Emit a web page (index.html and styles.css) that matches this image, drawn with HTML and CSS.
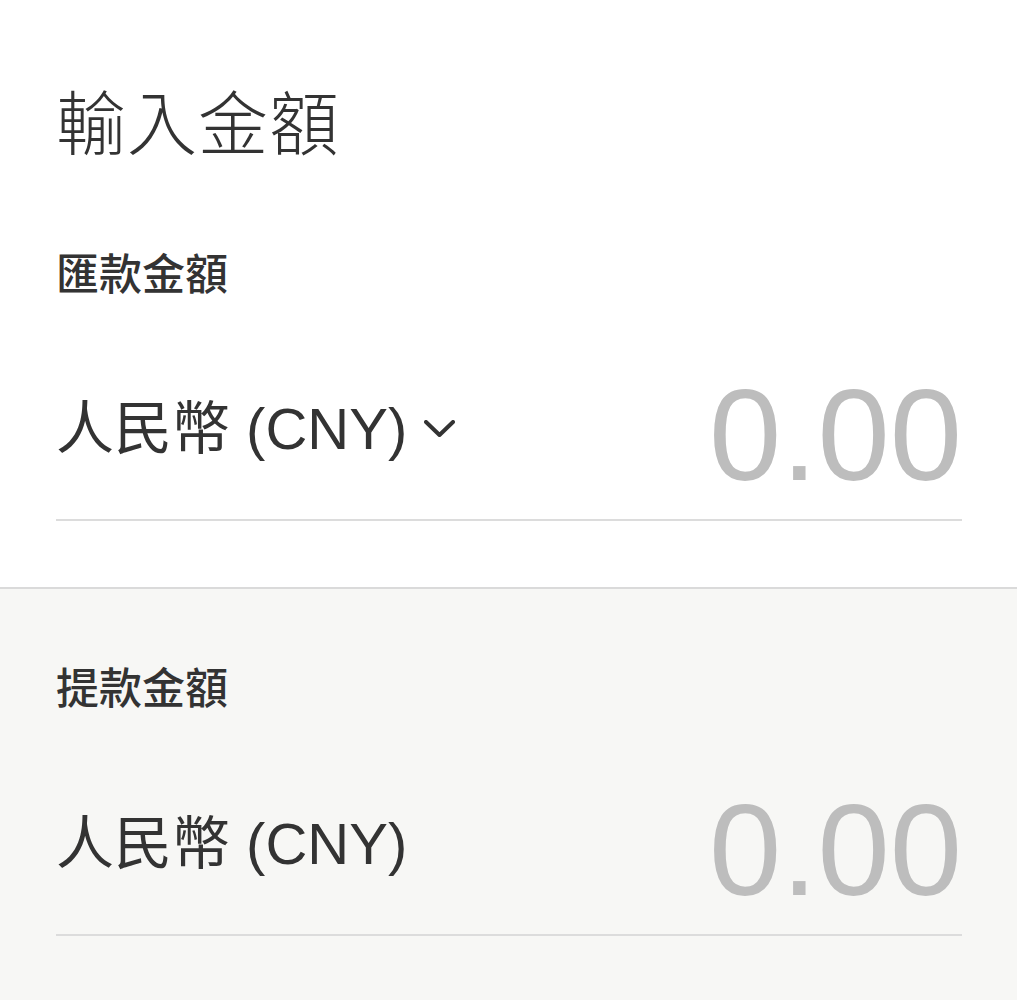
FILE: index.html
```html
<!DOCTYPE html>
<html lang="zh-Hant">
<head>
    <meta charset="UTF-8">
    <meta name="viewport" content="width=device-width, initial-scale=1.0">
    <title>輸入金額</title>
    <link rel="stylesheet" href="styles.css">
</head>
<body>
    <div id="container">
        <div class="panel panel-top">
            <h1 class="title">輸入金額</h1>
            <div class="field">
                <div class="field-label">匯款金額</div>
                <div class="amount-row">
                    <button class="currency" type="button">
                        <span>人民幣 (CNY)</span>
                        <svg class="chevron" width="31" height="19" viewBox="0 0 31 19">
                            <polyline points="2,2 15.5,15 29,2" fill="none" stroke="#333" stroke-width="4" stroke-linecap="round" stroke-linejoin="round"/>
                        </svg>
                    </button>
                    <div class="amount">0.00</div>
                </div>
            </div>
        </div>
        <div class="panel panel-muted">
            <div class="field">
                <div class="field-label">提款金額</div>
                <div class="amount-row">
                    <div class="currency">
                        <span>人民幣 (CNY)</span>
                    </div>
                    <div class="amount">0.00</div>
                </div>
            </div>
        </div>
    </div>
</body>
</html>
```

FILE: styles.css
```css
body {
    margin: 0;
    font-family: "Liberation Sans", "Noto Sans CJK TC", sans-serif;
    color: #333;
    background-color: #fff;
}

#container {
    display: flex;
    flex-direction: column;
    min-height: 100vh;
}

.panel {
    padding: 0 55px 66px 56px;
}

.panel-top {
    padding-top: 91px;
}

.panel-muted {
    flex: 1;
    padding-top: 79px;
    background-color: #f7f7f5;
    border-top: 2px solid #dadada;
}

.title {
    margin: 0 0 93px;
    font-size: 70px;
    font-weight: 300;
    line-height: 1;
    letter-spacing: 1px;
}

.field-label {
    font-size: 43px;
    font-weight: 500;
    line-height: 1;
    margin-bottom: 73px;
}

.panel-muted .field-label {
    margin-bottom: 74px;
}

.amount-row {
    display: flex;
    align-items: center;
    justify-content: space-between;
    padding-bottom: 19px;
    border-bottom: 2px solid #dcdcdc;
}

.currency {
    display: flex;
    align-items: center;
    gap: 17px;
    padding: 0 0 12px;
    border: none;
    background: none;
    font-family: inherit;
    font-size: 58px;
    line-height: 1;
    color: #333;
    cursor: pointer;
}

.chevron {
    display: block;
}

.amount {
    font-size: 130px;
    line-height: 1;
    color: #bdbdbd;
}
```
